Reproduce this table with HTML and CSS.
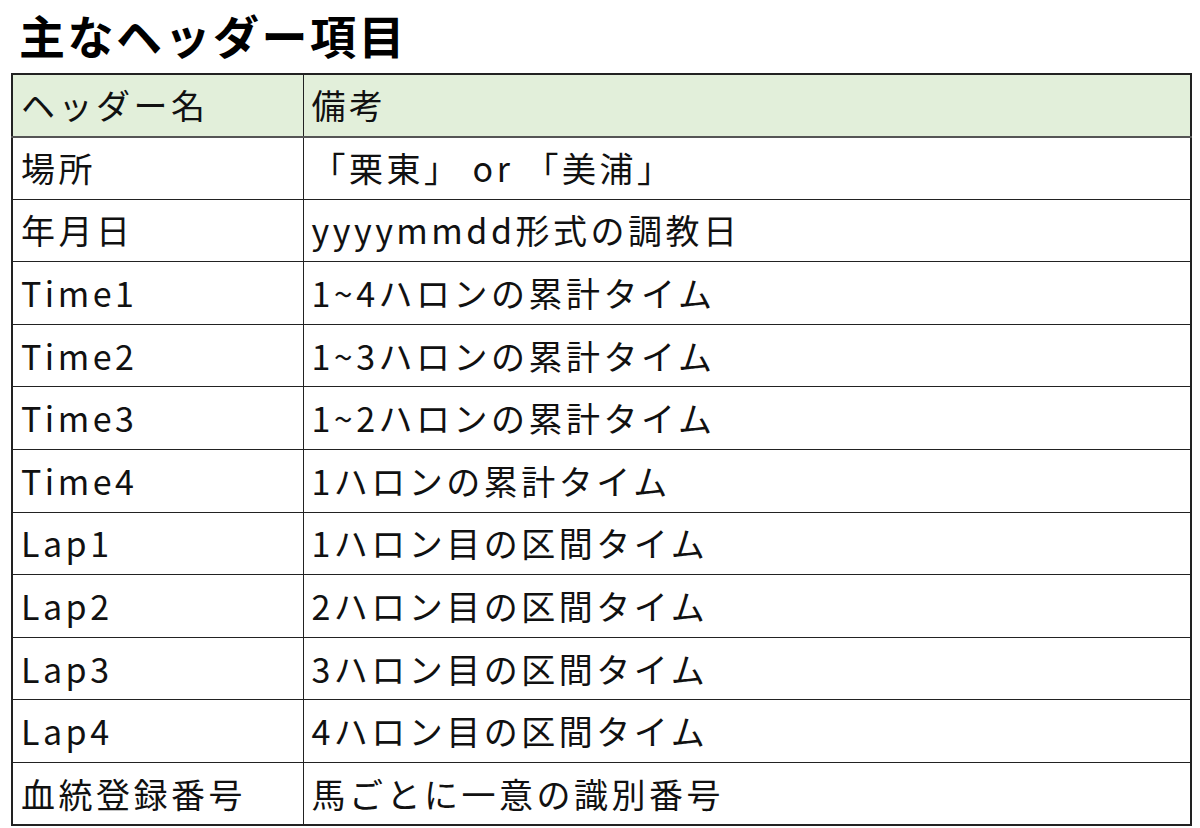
FILE: index.html
```html
<!DOCTYPE html>
<html lang="ja">
<head>
<meta charset="utf-8">
<link rel="stylesheet" href="styles.css">
</head>
<body>
<h1 class="title">主なヘッダー項目</h1>
<table class="grid">
  <colgroup><col class="c1"><col class="c2"></colgroup>
  <thead>
    <tr class="head"><th>ヘッダー名</th><th>備考</th></tr>
  </thead>
  <tbody>
    <tr><td>場所</td><td>「栗東」 or 「美浦」</td></tr>
    <tr><td>年月日</td><td>yyyymmdd形式の調教日</td></tr>
    <tr><td>Time1</td><td>1~4ハロンの累計タイム</td></tr>
    <tr><td>Time2</td><td>1~3ハロンの累計タイム</td></tr>
    <tr><td>Time3</td><td>1~2ハロンの累計タイム</td></tr>
    <tr><td>Time4</td><td>1ハロンの累計タイム</td></tr>
    <tr><td>Lap1</td><td>1ハロン目の区間タイム</td></tr>
    <tr><td>Lap2</td><td>2ハロン目の区間タイム</td></tr>
    <tr><td>Lap3</td><td>3ハロン目の区間タイム</td></tr>
    <tr><td>Lap4</td><td>4ハロン目の区間タイム</td></tr>
    <tr><td>血統登録番号</td><td>馬ごとに一意の識別番号</td></tr>
  </tbody>
</table>
</body>
</html>
```
FILE: styles.css
```css
html, body {
  margin: 0;
  padding: 0;
  background: #fff;
}
body {
  font-family: "Noto Sans CJK JP", "Noto Sans", sans-serif;
  color: #111;
}
.title {
  margin: 0;
  height: 73px;
  padding-left: 19px;
  font-size: 46px;
  font-weight: 700;
  line-height: 68px;
  letter-spacing: 2.5px;
  color: #000;
}
.grid {
  margin-left: 11px;
  width: 1181px;
  border-collapse: collapse;
  table-layout: fixed;
  border: 2px solid #222;
}
.c1 { width: 291px; }
.grid th, .grid td {
  height: 62.6px;
  padding: 0 0 0 8px;
  border: 1px solid #222;
  font-size: 34px;
  font-weight: 400;
  text-align: left;
  letter-spacing: 3.5px;
  line-height: 1;
  white-space: nowrap;
  box-sizing: border-box;
}
.head th {
  background: #e2efda;
  border-bottom: 2px solid #555;
}
```
